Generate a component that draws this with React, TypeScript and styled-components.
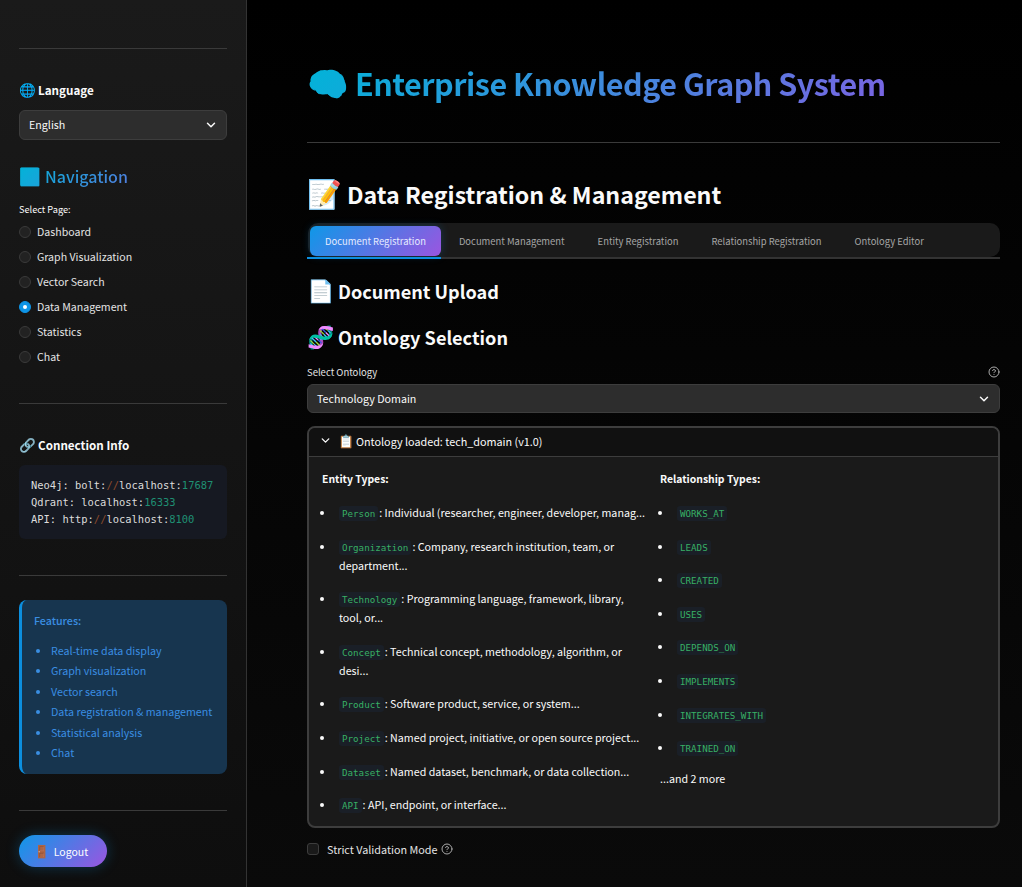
import React from 'react'
import styled, { createGlobalStyle } from 'styled-components'
import { ChevronDown, CircleHelp } from 'lucide-react'

const sans = `'Noto Sans CJK JP', 'Noto Sans', sans-serif`
const mono = `'DejaVu Sans Mono', 'Liberation Mono', monospace`
const textGradient = 'linear-gradient(135deg, #00b4d8 0%, #9055e4 100%)'
const fillGradient = 'linear-gradient(135deg, #0e98e8 0%, #9b55e0 100%)'

const GlobalStyle = createGlobalStyle`
  html, body {
    margin: 0;
    height: 100%;
    background: #000;
    overflow: hidden;
  }

  body {
    color: #fafafa;
    font-family: ${sans};
  }
`

const Shell = styled.div`
  display: flex;
  height: 100vh;
`

const Sidebar = styled.aside`
  background: linear-gradient(180deg, #1a1a1a 0%, #0e0e0e 100%);
  border-right: 1px solid #333;
  box-sizing: border-box;
  flex: 0 0 247px;
  padding: 48px 19px 0;
`

const Rule = styled.hr<{ $before?: number; $after?: number }>`
  background: #3a3a3a;
  border: 0;
  height: 1px;
  margin: ${(p) => p.$before ?? 0}px 0 ${(p) => p.$after ?? 0}px;
`

const Emoji = styled.span<{ $size: number; $gap: number }>`
  font-size: ${(p) => p.$size}px;
  letter-spacing: 0;
  line-height: 0;
  margin-right: ${(p) => p.$gap}px;
`

const SideHeading = styled.h4`
  font-size: 11.65px;
  font-weight: 700;
  height: 18px;
  line-height: 18px;
  margin: 0 0 11px;
  white-space: nowrap;
`

const Select = styled.div<{ $height: number }>`
  align-items: center;
  background: #2d2d2d;
  border: 1px solid #3d3d3d;
  border-radius: 6px;
  box-sizing: border-box;
  display: flex;
  font-size: 10.7px;
  height: ${(p) => p.$height}px;
  justify-content: space-between;
  padding: 0 8px 0 9px;

  span {
    margin-top: -1px;
  }
`

const NavHeading = styled.h3`
  background: ${textGradient};
  -webkit-background-clip: text;
  background-clip: text;
  color: transparent;
  font-size: 16px;
  font-weight: 500;
  height: 24px;
  line-height: 24px;
  margin: 24px 0 14px;
`

const SmallLabel = styled.div`
  font-size: 9.2px;
  height: 14px;
  line-height: 14px;
  margin-bottom: 7px;
`

const RadioList = styled.div`
  display: flex;
  flex-direction: column;
  gap: 7px;
`

const RadioRow = styled.label`
  align-items: center;
  color: #e4e4e4;
  display: flex;
  font-size: 10.6px;
  gap: 6px;
  height: 18px;

  span:last-child {
    margin-top: -2px;
  }
`

const RadioDot = styled.span<{ $on?: boolean }>`
  background: ${(p) => (p.$on ? '#0e94e6' : '#222')};
  border: 1px solid ${(p) => (p.$on ? '#0e94e6' : '#3a3a3a')};
  border-radius: 50%;
  box-sizing: border-box;
  height: 12px;
  position: relative;
  width: 12px;

  &::after {
    background: #fff;
    border-radius: 50%;
    content: '';
    display: ${(p) => (p.$on ? 'block' : 'none')};
    height: 4px;
    left: 3px;
    position: absolute;
    top: 3px;
    width: 4px;
  }
`

const CodeBox = styled.pre`
  background: #161922;
  border-radius: 6px;
  box-sizing: border-box;
  color: #dcdcdc;
  font-family: ${mono};
  font-size: 10.45px;
  height: 74px;
  line-height: 17px;
  margin: 0 0 36px;
  padding: 12px 12px 0;

  i {
    color: #8a4a2c;
    font-style: normal;
  }

  b {
    color: #1f8f73;
    font-weight: 400;
  }
`

const FeatureBox = styled.div`
  background: #17354f;
  border-left: 3px solid #0c8fdf;
  border-radius: 8px;
  box-sizing: border-box;
  color: #3a8ee2;
  font-size: 10.7px;
  height: 174px;
  margin-bottom: 36px;
  padding: 13px 12px;

  p {
    font-weight: 500;
    line-height: 16px;
    margin: 0 0 12px;
  }

  ul {
    margin: 0;
    padding: 0 0 0 17px;
  }

  li {
    line-height: 20.4px;
    white-space: nowrap;
  }
`

const LogoutButton = styled.button`
  background: ${fillGradient};
  border: 0;
  border-radius: 16px;
  box-shadow: 0 0 14px rgba(14, 148, 230, 0.3);
  color: #fff;
  display: block;
  font-family: ${sans};
  font-size: 10.5px;
  height: 32px;
  margin-top: 24px;
  padding: 0 4px 0 0;
  width: 88px;
`

const Main = styled.main`
  background: linear-gradient(180deg, #000 0%, #0a0a0a 100%);
  box-sizing: border-box;
  flex: 1;
  padding: 62px 22px 0 60px;
`

const Title = styled.h1`
  background: ${textGradient};
  -webkit-background-clip: text;
  background-clip: text;
  color: transparent;
  font-size: 30.5px;
  font-weight: 700;
  height: 42px;
  letter-spacing: -0.5px;
  line-height: 42px;
  margin: 0 0 38px;
`

const PageHeading = styled.h2`
  font-size: 23.2px;
  font-weight: 700;
  height: 36px;
  line-height: 36px;
  margin: 33px 0 11px;
`

const TabStrip = styled.div`
  border-bottom: 2px solid #333;
  margin-left: 1px;
`

const TabBar = styled.div`
  background: #1a1a1a;
  border-radius: 10px;
  box-sizing: border-box;
  display: flex;
  gap: 3px;
  height: 34px;
  padding: 3px 2px;
`

const Tab = styled.div<{ $active?: boolean }>`
  align-items: center;
  background: ${(p) => (p.$active ? fillGradient : 'transparent')};
  border-radius: 6px;
  box-shadow: ${(p) => (p.$active ? '0 0 8px rgba(14, 148, 230, 0.25)' : 'none')};
  color: ${(p) => (p.$active ? '#e8ecff' : '#a6a6a6')};
  display: flex;
  font-size: 9.44px;
  height: 30px;
  padding: 0 15px;
  position: relative;
  white-space: nowrap;

  &::after {
    background: #0c8fdf;
    bottom: -3px;
    content: '';
    display: ${(p) => (p.$active ? 'block' : 'none')};
    height: 2px;
    left: -3px;
    position: absolute;
    right: 0;
  }
`

const SectionHeading = styled.h3`
  font-size: 18.1px;
  font-weight: 700;
  height: 28px;
  line-height: 28px;
  margin: 18px 0 13px;
`

const FieldLabel = styled.div`
  align-items: center;
  color: #e4e4e4;
  display: flex;
  font-size: 9.5px;
  height: 14px;
  justify-content: space-between;
  margin: 0 0 6px;

  span,
  svg {
    margin-top: 2px;
  }
`

const Expander = styled.section`
  background: #1a1a1a;
  border: 2px solid #3d3d3d;
  border-radius: 8px;
  box-sizing: border-box;
  height: 402px;
  margin-top: 13px;
`

const ExpanderHeader = styled.div`
  align-items: center;
  background: #111;
  border-bottom: 1px solid #3d3d3d;
  border-radius: 6px 6px 0 0;
  box-sizing: border-box;
  display: flex;
  font-size: 10.8px;
  gap: 6px;
  height: 29px;
  padding: 0 0 3px 10px;
`

const Columns = styled.div`
  display: grid;
  grid-template-columns: 338px 1fr;
  padding: 14px 12px 0 13px;
`

const ColumnTitle = styled.div`
  font-size: 10.4px;
  font-weight: 700;
  height: 16px;
  line-height: 16px;
  margin-bottom: 16px;
`

const TypeList = styled.ul<{ $trim?: number }>`
  font-size: 10.7px;
  line-height: 19px;
  list-style: none;
  margin: 0;
  padding: 0 ${(p) => p.$trim ?? 0}px 0 17px;
`

const TypeItem = styled.li`
  margin-bottom: 14.6px;
  position: relative;

  &::before {
    background: #fafafa;
    border-radius: 50%;
    content: '';
    height: 4px;
    left: -19px;
    position: absolute;
    top: 8px;
    width: 4px;
  }
`

const Chip = styled.code`
  background: #1a1f27;
  border-radius: 3px;
  color: #38b065;
  font-family: ${mono};
  font-size: 9.2px;
  line-height: 1;
  margin-right: 1px;
  padding: 2px 3px;
`

const MoreNote = styled.div`
  font-size: 10.7px;
  line-height: 19px;
  margin-top: -3px;
`

const CheckRow = styled.label`
  align-items: center;
  color: #e4e4e4;
  display: flex;
  font-size: 10.8px;
  gap: 8px;
  height: 18px;
  margin-top: 12px;

  span:nth-child(2) {
    margin: 0 -4px 0 0;
  }
`

const CheckBox = styled.span`
  background: #1a1a1a;
  border: 1px solid #3d3d3d;
  border-radius: 3px;
  box-sizing: border-box;
  height: 12px;
  width: 12px;
`

const pages = ['Dashboard', 'Graph Visualization', 'Vector Search', 'Data Management', 'Statistics', 'Chat']
const features = [
  'Real-time data display',
  'Graph visualization',
  'Vector search',
  'Data registration & management',
  'Statistical analysis',
  'Chat',
]
const tabs = ['Document Registration', 'Document Management', 'Entity Registration', 'Relationship Registration', 'Ontology Editor']
const entityTypes = [
  ['Person', 'Individual (researcher, engineer, developer, manag...'],
  ['Organization', 'Company, research institution, team, or department...'],
  ['Technology', 'Programming language, framework, library, tool, or...'],
  ['Concept', 'Technical concept, methodology, algorithm, or desi...'],
  ['Product', 'Software product, service, or system...'],
  ['Project', 'Named project, initiative, or open source project...'],
  ['Dataset', 'Named dataset, benchmark, or data collection...'],
  ['API', 'API, endpoint, or interface...'],
]
const relationTypes = ['WORKS_AT', 'LEADS', 'CREATED', 'USES', 'DEPENDS_ON', 'IMPLEMENTS', 'INTEGRATES_WITH', 'TRAINED_ON']

export default function App() {
  return (
    <Shell>
      <GlobalStyle />
      <Sidebar>
        <Rule $after={32} />
        <SideHeading>
          <Emoji $size={13.5} $gap={2}>🌐</Emoji>Language
        </SideHeading>
        <Select $height={30}>
          <span>English</span>
          <ChevronDown size={14} strokeWidth={2.5} />
        </Select>
        <NavHeading>
          <Emoji $size={17.5} $gap={4}>🟦</Emoji>Navigation
        </NavHeading>
        <SmallLabel>Select Page:</SmallLabel>
        <RadioList>
          {pages.map((page) => (
            <RadioRow key={page}>
              <RadioDot $on={page === 'Data Management'} />
              <span>{page}</span>
            </RadioRow>
          ))}
        </RadioList>
        <Rule $before={37} $after={32} />
        <SideHeading>
          <Emoji $size={13.5} $gap={2}>🔗</Emoji>Connection Info
        </SideHeading>
        <CodeBox>
          {'Neo4j: bolt:'}<i>//</i>{'localhost:'}<b>17687</b>{'\n'}
          {'Qdrant: localhost:'}<b>16333</b>{'\n'}
          {'API: http:'}<i>//</i>{'localhost:'}<b>8100</b>
        </CodeBox>
        <Rule $after={24} />
        <FeatureBox>
          <p>Features:</p>
          <ul>
            {features.map((feature) => (
              <li key={feature}>{feature}</li>
            ))}
          </ul>
        </FeatureBox>
        <Rule />
        <LogoutButton>
          <Emoji $size={12.5} $gap={4}>🚪</Emoji>Logout
        </LogoutButton>
      </Sidebar>

      <Main>
        <Title>
          <Emoji $size={33.5} $gap={6}>🧠</Emoji>Enterprise Knowledge Graph System
        </Title>
        <Rule />
        <PageHeading>
          <Emoji $size={28} $gap={5}>📝</Emoji>Data Registration &amp; Management
        </PageHeading>
        <TabStrip>
          <TabBar>
            {tabs.map((tab, i) => (
              <Tab key={tab} $active={i === 0}>
                {tab}
              </Tab>
            ))}
          </TabBar>
        </TabStrip>
        <SectionHeading>
          <Emoji $size={22} $gap={4}>📄</Emoji>Document Upload
        </SectionHeading>
        <SectionHeading>
          <Emoji $size={22} $gap={4}>🧬</Emoji>Ontology Selection
        </SectionHeading>
        <FieldLabel>
          <span>Select Ontology</span>
          <CircleHelp size={12} color="#aaa" />
        </FieldLabel>
        <Select $height={29}>
          <span>Technology Domain</span>
          <ChevronDown size={14} strokeWidth={2.5} />
        </Select>
        <Expander>
          <ExpanderHeader>
            <ChevronDown size={13} strokeWidth={2.5} />
            <span>
              <Emoji $size={13} $gap={2}>📋</Emoji>Ontology loaded: tech_domain (v1.0)
            </span>
          </ExpanderHeader>
          <Columns>
            <div>
              <ColumnTitle>Entity Types:</ColumnTitle>
              <TypeList $trim={14}>
                {entityTypes.map(([name, text]) => (
                  <TypeItem key={name}>
                    <Chip>{name}</Chip>: {text}
                  </TypeItem>
                ))}
              </TypeList>
            </div>
            <div>
              <ColumnTitle>Relationship Types:</ColumnTitle>
              <TypeList>
                {relationTypes.map((name) => (
                  <TypeItem key={name}>
                    <Chip>{name}</Chip>
                  </TypeItem>
                ))}
              </TypeList>
              <MoreNote>...and 2 more</MoreNote>
            </div>
          </Columns>
        </Expander>
        <CheckRow>
          <CheckBox />
          <span>Strict Validation Mode</span>
          <CircleHelp size={12} color="#aaa" />
        </CheckRow>
      </Main>
    </Shell>
  )
}
